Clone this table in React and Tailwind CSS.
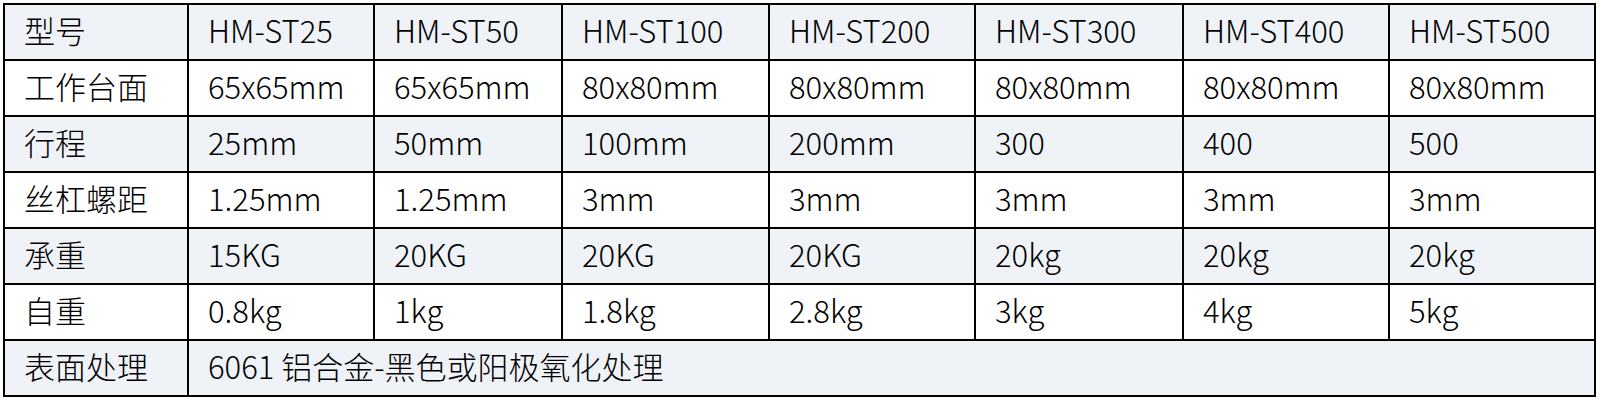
const cols = ["型号", "HM-ST25", "HM-ST50", "HM-ST100", "HM-ST200", "HM-ST300", "HM-ST400", "HM-ST500"];

const rows = [
  ["工作台面", "65x65mm", "65x65mm", "80x80mm", "80x80mm", "80x80mm", "80x80mm", "80x80mm"],
  ["行程", "25mm", "50mm", "100mm", "200mm", "300", "400", "500"],
  ["丝杠螺距", "1.25mm", "1.25mm", "3mm", "3mm", "3mm", "3mm", "3mm"],
  ["承重", "15KG", "20KG", "20KG", "20KG", "20kg", "20kg", "20kg"],
  ["自重", "0.8kg", "1kg", "1.8kg", "2.8kg", "3kg", "4kg", "5kg"],
];

const widths = [184, 186, 188, 207, 206, 208, 206, 206];

const cell = "border-2 border-black h-[56px] pl-[19px] pr-2 pt-0 pb-[5px] text-left align-middle font-light whitespace-nowrap";

export default function App() {
  return (
    <div className="bg-white w-[1602px] h-[401px] pt-[3px] pl-[3px] text-[31px] leading-none text-black font-['Noto_Sans_CJK_SC','Noto_Sans',sans-serif]">
      <table className="border-collapse table-fixed w-[1593px]">
        <colgroup>
          {widths.map((w, i) => (
            <col key={i} style={{ width: w }} />
          ))}
        </colgroup>
        <tbody>
          <tr className="bg-[#eff3f8]">
            {cols.map((c) => (
              <td key={c} className={cell}>{c}</td>
            ))}
          </tr>
          {rows.map((r, i) => (
            <tr key={r[0]} className={i % 2 === 0 ? "bg-white" : "bg-[#eff3f8]"}>
              {r.map((c, j) => (
                <td key={j} className={cell}>{c}</td>
              ))}
            </tr>
          ))}
          <tr className="bg-[#eff3f8]">
            <td className={cell}>表面处理</td>
            <td className={cell} colSpan={7}>6061 铝合金-黑色或阳极氧化处理</td>
          </tr>
        </tbody>
      </table>
    </div>
  );
}
